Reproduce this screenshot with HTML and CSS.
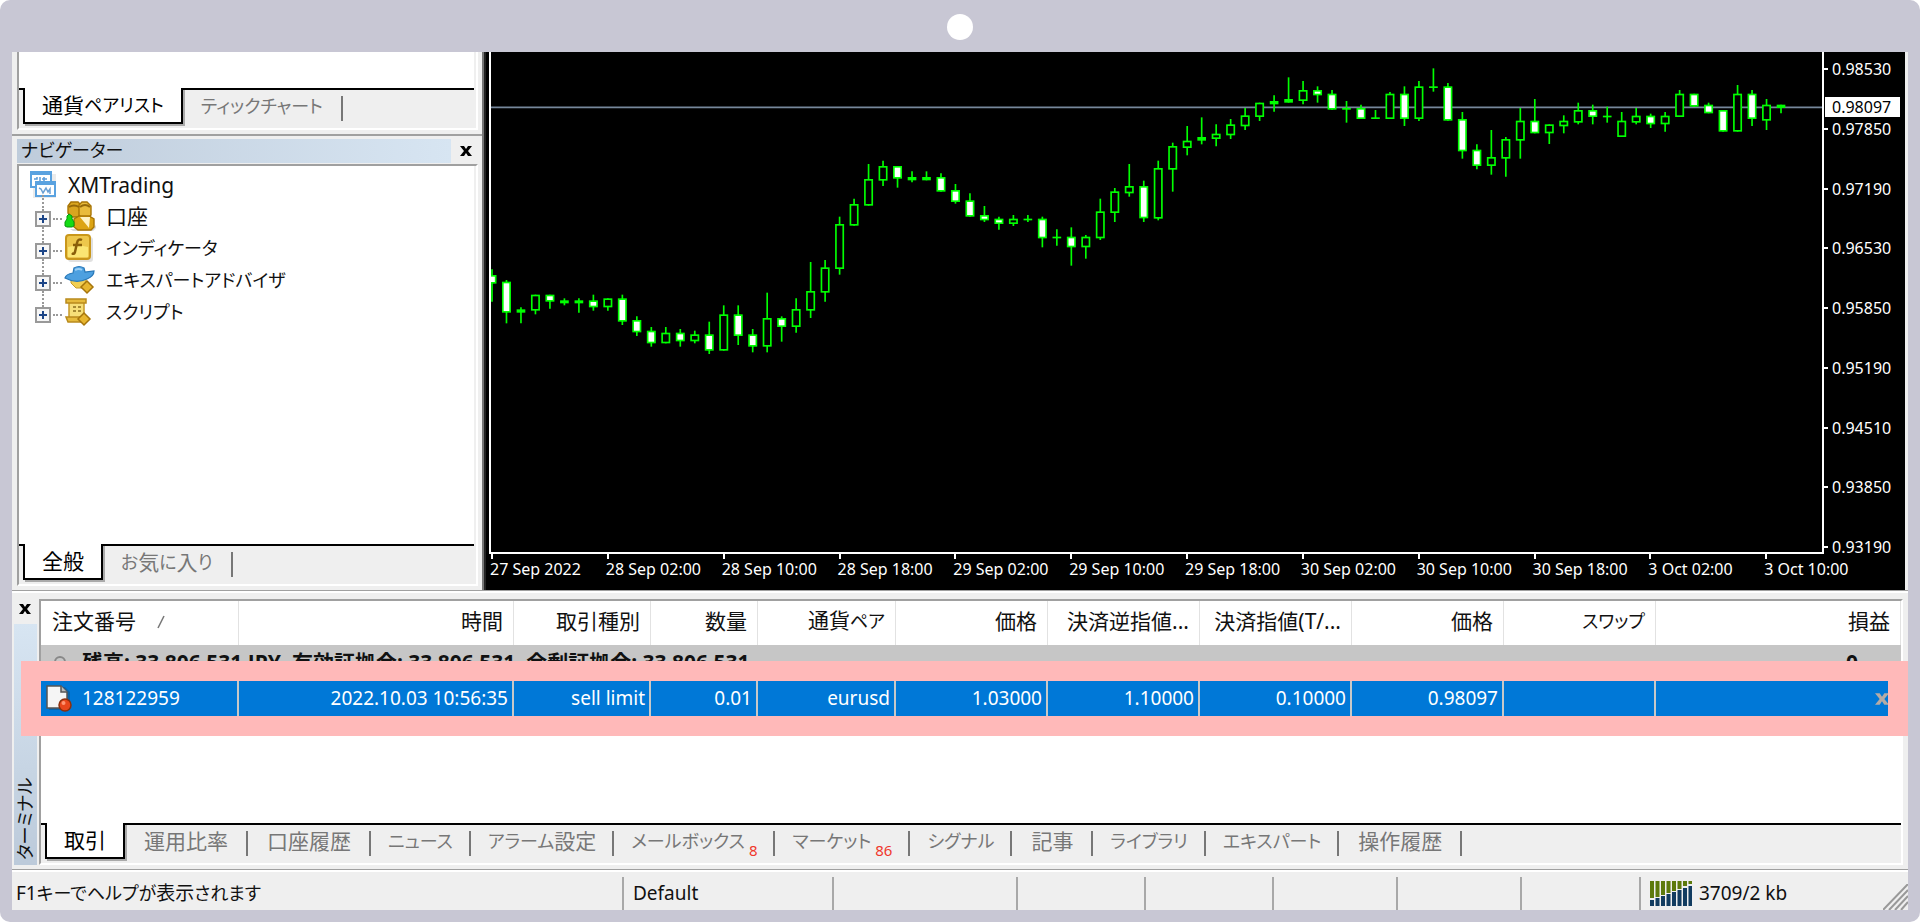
FILE: index.html
```html
<!DOCTYPE html>
<html lang="ja">
<head>
<meta charset="utf-8">
<title>XMTrading</title>
<link rel="stylesheet" href="styles.css">
</head>
<body>
<div class="device">
  <header class="device-top"><span class="camera"></span></header>
  <main class="screen">
    <div class="workspace">
      <aside class="sidebar">
        <section class="panel">
          <div class="market-list"></div>
          <nav class="tabs">
            <button class="tab active">通貨<span class="kana">ペアリスト</span></button>
            <button class="tab"><span class="kana">ティックチャート</span></button>
          </nav>
        </section>
        <section class="navigator">
          <header class="panel-title">
            <h2 class="kana">ナビゲーター</h2>
            <button class="close" aria-label="閉じる"><svg viewBox="0 0 12 10" width="12" height="10"><path d="M0 0h4l2 3 2-3h4L8 5l4 5H8L6 7l-2 3H0l4-5z"/></svg></button>
          </header>
          <div class="panel nav-panel">
            <ul class="tree">
              <li class="root">
                <svg class="ico" viewBox="0 0 28 28" width="28" height="28"><rect x="3" y="3" width="23" height="24" fill="#000" opacity=".08"/><rect x="1" y="1" width="20" height="15" fill="#fff" stroke="#5aa2e0" stroke-width="2"/><path d="M0 0h22v4H0z" fill="#5aa2e0"/><path d="M4 8h3v-2M10 6v5M14 6v5M12 8h5" stroke="#5a9bd8" stroke-width="1.5" fill="none"/><rect x="6" y="11" width="19" height="14" fill="#fff" stroke="#5aa2e0" stroke-width="2"/><path d="M5 10h21v4H5z" fill="#5aa2e0"/><path d="M9 17l2 1 2 4 3-5 2 4 2-3v5" stroke="#6ba0d4" stroke-width="1.5" fill="none"/></svg>
                <span>XMTrading</span>
              </li>
              <li>
                <button class="expand" aria-label="展開"></button>
                <svg class="ico" viewBox="0 0 32 30" width="32" height="30"><path d="M6 28h22l4-4v3l-3 3H9z" fill="#000" opacity=".15"/><g stroke="#a87404" stroke-width="1.4"><path d="M4 5l3-4h7l3 3v9l-3 3H7l-3-4z" fill="#d9a520"/><path d="M15 4l3-3h5l4 4v9l-4 4h-5l-3-4z" fill="#e9bb3c"/><path d="M10 18l5-3h10l5 3v8l-3 3H14l-4-3z" fill="#dca414"/></g><path d="M5 6q5-3 10 0M16 6q5-4 10 0" stroke="#95690a" stroke-width="2" fill="none"/><path d="M16 16l9 11 1-11z" fill="#fff3c5"/><path d="M1 25v-4l2-3v-3l2-2 3 2v3l2 3v4l-2 1H3z" fill="#14dc14" stroke="#08950c"/></svg>
                <span>口座</span>
              </li>
              <li>
                <button class="expand" aria-label="展開"></button>
                <svg class="ico" viewBox="0 0 32 30" width="32" height="30"><rect x="4" y="4" width="25" height="25" rx="3" fill="#000" opacity=".12"/><rect x="2" y="2" width="24" height="24" rx="3" fill="#edc74c" stroke="#c9971b" stroke-width="2"/><path d="M4 14q10-3 20 0v10H4z" fill="#fbe673"/><path d="M18 7q-4-2-5 3l-2 9q-1 3-3 1M9 12h9" stroke="#8a5f0a" stroke-width="2.500" fill="none"/></svg>
                <span class="kana">インディケータ</span>
              </li>
              <li>
                <button class="expand" aria-label="展開"></button>
                <svg class="ico" viewBox="0 0 32 30" width="32" height="30"><path d="M7 11h15v7l-4 5h-6l-5-5z" fill="#f1ce52" stroke="#c79a28"/><path d="M1 13q1-4 8-5l1-5q5-3 10 0l1 4 9-1q0 5-7 8-11 5-22-1z" fill="#4da0e0" stroke="#2878b8" stroke-width="1.200"/><path d="M11 5q4-2 7 0" stroke="#9bd0f5" stroke-width="2" fill="none"/><path d="M23 16l6 6-6 6-6-6z" fill="#e7b62f" stroke="#a6750c" stroke-width="1.500"/></svg>
                <span class="kana">エキスパートアドバイザ</span>
              </li>
              <li>
                <button class="expand" aria-label="展開"></button>
                <svg class="ico" viewBox="0 0 32 30" width="32" height="30"><path d="M5 5h15v17H5z" fill="#f6df78" stroke="#c79a28" stroke-width="1.500"/><path d="M2 2h20v4H2zM2 20h17v5H4z" fill="#e6bb3c" stroke="#b98b1c" stroke-width="1.500"/><path d="M9 10h3M14 10h3M9 14h3M14 14h3" stroke="#8a6d1c" stroke-width="1.500"/><path d="M20 16l6 6-6 6-6-6z" fill="#e7b62f" stroke="#a6750c" stroke-width="1.500"/></svg>
                <span class="kana">スクリプト</span>
              </li>
            </ul>
            <nav class="tabs">
              <button class="tab active">全般</button>
              <button class="tab"><span class="kana">お</span>気<span class="kana">に</span>入<span class="kana">り</span></button>
            </nav>
          </div>
        </section>
      </aside>

      <section class="chart">
        <div class="plot"><svg id="candles" viewBox="33 36 3993 1497" preserveAspectRatio="none"></svg></div>
        <ul class="price-axis">
          <li>0.98530</li><li>0.97850</li><li>0.97190</li><li>0.96530</li><li>0.95850</li><li>0.95190</li><li>0.94510</li><li>0.93850</li><li>0.93190</li>
        </ul>
        <output class="price-now">0.98097</output>
        <ul class="time-axis">
          <li>27 Sep 2022</li><li>28 Sep 02:00</li><li>28 Sep 10:00</li><li>28 Sep 18:00</li><li>29 Sep 02:00</li><li>29 Sep 10:00</li><li>29 Sep 18:00</li><li>30 Sep 02:00</li><li>30 Sep 10:00</li><li>30 Sep 18:00</li><li>3 Oct 02:00</li><li>3 Oct 10:00</li>
        </ul>
      </section>
    </div>

    <section class="terminal">
      <header class="terminal-side">
        <button class="close" aria-label="閉じる"><svg viewBox="0 0 12 10" width="12" height="10"><path d="M0 0h4l2 3 2-3h4L8 5l4 5H8L6 7l-2 3H0l4-5z"/></svg></button>
        <h2 class="terminal-title"><span class="kana">ターミナル</span></h2>
      </header>
      <div class="terminal-box">
        <div class="orders">
          <table class="order-table">
            <colgroup><col class="c-id"><col class="c-time"><col class="c-type"><col class="c-vol"><col class="c-sym"><col class="c-num"><col class="c-num"><col class="c-num"><col class="c-num"><col class="c-num"><col></colgroup>
            <thead><tr>
              <th>注文番号 <svg class="sort" viewBox="0 0 8 14" width="8" height="14"><path d="M7 1L1 13" stroke="#777" stroke-width="1.500"/></svg></th><th>時間</th><th>取引種別</th><th>数量</th><th>通貨<span class="kana">ペア</span></th><th>価格</th><th>決済逆指値...</th><th>決済指値(T/...</th><th>価格</th><th><span class="kana">スワップ</span></th><th>損益</th>
            </tr></thead>
            <tbody>
              <tr class="summary"><td colspan="10"><div class="balance"><span class="dot"></span><span>残高: 33 806 531 JPY&nbsp; 有効証拠金: 33 806 531&nbsp; 余剰証拠金: 33 806 531</span></div></td><td>0</td></tr>
              <tr class="order">
                <td><div class="order-id"><svg viewBox="0 0 28 28" width="28" height="28"><path d="M4 3h16l5 5v18H4z" fill="#222" opacity=".25"/><path d="M2 2h14l6 6v16H2z" fill="#f5f5f5" stroke="#555" stroke-width="1.500"/><path d="M16 2v6h6" fill="#bbb" stroke="#555" stroke-width="1.500"/><circle cx="20" cy="21" r="6" fill="#e8471c" stroke="#8c2f0c" stroke-width="1.500"/><circle cx="18.500" cy="19" r="2" fill="#ff9470"/></svg><span>128122959</span></div></td>
                <td>2022.10.03 10:56:35</td><td>sell limit</td><td>0.01</td><td>eurusd</td><td>1.03000</td><td>1.10000</td><td>0.10000</td><td>0.98097</td><td></td>
                <td class="remove"><button class="close pale" aria-label="注文を取消"><svg viewBox="0 0 12 10" width="14" height="12"><path d="M0 0h4l2 3 2-3h4L8 5l4 5H8L6 7l-2 3H0l4-5z"/></svg></button></td>
              </tr>
            </tbody>
          </table>
          <div class="highlight"></div>
        </div>
        <nav class="tabs terminal-tabs">
          <button class="tab active">取引</button>
          <button class="tab">運用比率</button>
          <button class="tab">口座履歴</button>
          <button class="tab"><span class="kana">ニュース</span></button>
          <button class="tab"><span class="kana">アラーム</span>設定</button>
          <button class="tab"><span class="kana">メールボックス</span><sub>8</sub></button>
          <button class="tab"><span class="kana">マーケット</span><sub>86</sub></button>
          <button class="tab"><span class="kana">シグナル</span></button>
          <button class="tab">記事</button>
          <button class="tab"><span class="kana">ライブラリ</span></button>
          <button class="tab"><span class="kana">エキスパート</span></button>
          <button class="tab">操作履歴</button>
        </nav>
      </div>
    </section>

    <footer class="status">
      <span class="cell help">F1<span class="kana">キーでヘルプが</span>表示<span class="kana">されます</span></span>
      <span class="cell s-profile">Default</span>
      <span class="cell s-a"></span><span class="cell s-b"></span><span class="cell s-b"></span><span class="cell s-c"></span><span class="cell s-c"></span><span class="cell s-d"></span>
      <span class="cell s-net">
        <svg viewBox="0 0 42 25" width="42" height="25"><path d="M0 0h4v17H0zM5.500 0h4v16h-4zM11 0h4v14h-4zM16.500 0h4v12h-4zM22 0h4v10h-4zM27.500 0h4v8h-4zM33 0h4v5h-4zM38.500 0h3.500v3h-3.500z" fill="#5d7a0c"/><path d="M0 19h4v6H0zM5.500 17h4v8h-4zM11 15h4v10h-4zM16.500 13h4v12h-4zM22 11h4v14h-4zM27.500 9h4v16h-4zM33 7h4v18h-4zM38.500 5h3.500v20h-3.500z" fill="#123c60"/></svg>
        3709/2 kb
      </span>
      <svg class="grip" viewBox="0 0 25 26" width="25" height="26"><path d="M0 26L25 0M6 26L25 6M12 26L25 12M18 26L25 18" stroke="#999" stroke-width="2"/></svg>
    </footer>
  </main>
</div>
<script src="chart.js"></script>
</body>
</html>
```
FILE: styles.css
```css
* { box-sizing: border-box; }
body { margin: 0; background: #fff; color: #111; font: 19px/26px "Noto Sans", "Noto Sans CJK JP", sans-serif; }
ul { list-style: none; margin: 0; padding: 0; }
h2 { margin: 0; font: inherit; }
svg { display: block; }
button { font: inherit; color: inherit; background: none; border: 0; padding: 0; }
.kana { font-size: 18px; font-feature-settings: "palt"; }

.device { min-height: 100vh; display: flex; flex-direction: column; padding: 0 12px 12px; background: #c8c7d4; border-radius: 10px; }
.device-top { height: 52px; padding-top: 2px; display: flex; justify-content: center; align-items: center; }
.camera { width: 26px; height: 26px; border-radius: 50%; background: #fff; }
.screen { flex: 1; display: flex; flex-direction: column; background: #efefef; }

.workspace { flex: 1; display: flex; border-bottom: 1px solid #a0a0a0; }
.sidebar { flex: 0 0 474px; display: flex; flex-direction: column; border-right: 4px solid #777; border-right-style: ridge; }
.panel { margin: 0 4px 4px 5px; border: 2px solid #fff; border-width: 0 2px 2px 2px; border-left-color: #a0a0a0; }
.market-list { height: 36px; margin-right: 2px; background: #fff; }
.navigator { flex: 1; display: flex; flex-direction: column; border-top: 2px solid #a0a0a0; padding-top: 3px; }
.panel-title { display: flex; align-items: center; height: 24px; margin: 0 6px 1px 5px; }
.panel-title h2 { flex: 1; padding-left: 4px; margin-right: 8px; padding-bottom: 2px; line-height: 22px; background: linear-gradient(90deg, #bfccdb, #d7e5f2); }
.close { width: 14px; height: 14px; display: grid; place-items: center; fill: #000; }
.panel-title .close { margin-right: 3px; }
.nav-panel { flex: 1; display: flex; flex-direction: column; border-top: 2px solid #a0a0a0; }

.tree { flex: 1; margin-right: 2px; padding-top: 2px; background: #fff; }
.tree li { position: relative; display: flex; align-items: center; height: 32px; padding: 0 0 2px 16px; font-size: 21px; }
.tree li > span { margin-left: 10px; }
.tree .root { padding: 0 0 0 11px; height: 33px; }
.tree .ico { flex: none; }
.expand { position: relative; width: 16px; height: 16px; margin: 6px 13px 0 0; border: 2px solid #999; background: linear-gradient(#1c4587, #1c4587) center / 8px 2px no-repeat, linear-gradient(#1c4587, #1c4587) center / 2px 8px no-repeat, #f6f6f6; }
.expand::before { content: ""; position: absolute; left: 5px; bottom: 14px; height: 16px; border-left: 2px dotted #999; }
.expand::after { content: ""; position: absolute; left: 16px; top: 5px; width: 9px; border-top: 2px dotted #999; }

.tabs { display: flex; height: 40px; margin-right: 2px; padding-left: 4px; border-top: 2px solid #000; }
.tab { height: 25px; margin-top: 6px; padding: 0 18px; line-height: 20px; display: flex; align-items: flex-start; border-right: 2px solid #777; color: #777; font-size: 21px; white-space: nowrap; }
.tab.active { height: 36px; margin-top: -2px; padding: 7px 17px 0; border: 2px solid #000; border-top: 0; background: #fff; color: #000; box-shadow: 2px 2px 0 #aaa; }
.tab sub { align-self: flex-end; margin-left: 4px; color: #f0372c; font-size: 15px; line-height: 12px; }
.terminal-tabs { margin-right: 0; }
.terminal-tabs .tab { padding: 0 18px 0 19px; }
.terminal-tabs .tab:has(> .kana:first-child) { padding: 0 16px 0 17px; }
.terminal-tabs .tab.active { padding: 7px 17px 0; }

.chart { position: relative; flex: 1; display: grid; grid-template: 1fr 36px / 1fr 81px; padding-left: 3px; margin-right: 3px; background: #000; color: #fff; font-size: 16px; line-height: 24px; }
.plot { border: 2px solid #fff; border-top: 0; min-height: 0; }
.plot svg { width: 100%; height: 499px; }
.price-axis { display: flex; flex-direction: column; justify-content: space-between; height: 502px; margin: 5px 0 -7px; }
.price-axis li { display: flex; align-items: center; gap: 4px; }
.price-axis li::before { content: ""; width: 4px; height: 2px; background: #fff; }
.price-now { position: absolute; right: 5px; top: 45px; width: 75px; padding-left: 7px; background: #fff; color: #000; line-height: 20px; }
.time-axis { grid-column: 1 / -1; display: grid; grid-template-columns: repeat(12, 1fr); padding-right: 26px; }
.time-axis li { padding-left: 1px; white-space: nowrap; line-height: 22px; }
.time-axis li::before { content: ""; display: block; width: 2px; height: 5px; margin: 0 0 -1px 1px; background: #fff; }

.terminal { display: flex; gap: 2px; padding: 6px 5px 4px 2px; border-top: 2px solid #fff; }
.terminal-side { flex: 0 0 23px; display: flex; flex-direction: column; align-items: center; }
.terminal-side .close { margin: 3px 2px 8px 0; }
.terminal-title { flex: 1; width: 100%; padding-top: 5px; line-height: 23px; writing-mode: vertical-rl; text-orientation: sideways; transform: rotate(180deg); background: linear-gradient(#bccada, #d7e5f2); }
.terminal-box { flex: 1; min-width: 0; border: 2px solid #fff; border-color: #a0a0a0 #fff #fff #a0a0a0; }
.orders { position: relative; min-height: 222px; background: #fff; }
.order-table { width: 100%; table-layout: fixed; border-collapse: separate; border-spacing: 0; text-align: right; }
.c-id { width: 198px; } .c-time { width: 275px; } .c-type { width: 137px; } .c-vol { width: 107px; } .c-sym { width: 138px; } .c-num { width: 152px; }
.order-table th { height: 44px; padding: 0 10px 5px 0; border-right: 1px solid #e2e2e2; font-weight: 400; font-size: 21px; text-align: right; white-space: nowrap; }
.order-table th:first-child { padding-left: 11px; text-align: left; }
.sort { display: inline-block; margin-left: 16px; }
.summary td { height: 36px; padding: 0 43px 2px 0; background: #c6c6c6; font-weight: 700; font-size: 21px; }
.summary td:first-child { padding: 0 0 2px 13px; text-align: left; }
.balance { display: flex; align-items: center; gap: 16px; white-space: nowrap; }
.dot { width: 12px; height: 12px; border: 2px solid #888; border-radius: 50%; }
.order td { height: 36px; padding: 0 4px 3px 0; background: #0078d7; color: #fff; border-right: 2px solid #c8c8c8; white-space: nowrap; }
.order .remove { padding: 0 12px 0 0; border-right: 0; }
.remove .close { margin-left: auto; fill: #b5aba5; }
.order-id { display: flex; align-items: center; gap: 9px; padding-left: 4px; }
.highlight { position: absolute; left: -20px; right: -7px; top: 60px; height: 75px; border: 20px solid #ffb9b9; pointer-events: none; }

.status { display: flex; align-items: flex-end; height: 41px; border-top: 1px solid #a0a0a0; box-shadow: inset 0 2px #fff; }
.cell { display: flex; align-items: center; height: 33px; padding-bottom: 1px; border-right: 2px solid #a8a8a8; white-space: nowrap; }
.help { flex: 1; padding-left: 4px; }
.s-profile { width: 210px; padding-left: 9px; }
.s-a { width: 184px; } .s-b { width: 128px; } .s-c { width: 124px; } .s-d { width: 119px; }
.s-net { width: 242px; gap: 7px; padding-left: 9px; border: 0; }
```
FILE: chart.js
```javascript
// Each candle: high, body top, body bottom, low, kind (w: filled, h: hollow, f: doji)
const candles = `688 705 731 785 w,720 725 818 850 w,802 808 818 850 f,764 764 812 823 h,764 764 785 806 w,775 781 790 796 f,775 781 790 818 f,764 781 802 812 w,775 775 802 812 h,764 775 845 855 w,829 840 877 888 w,861 872 910 920 w,861 878 910 910 h,867 878 904 920 w,872 883 904 910 h,845 883 932 942 w,796 823 932 932 h,796 823 888 915 w,867 883 920 937 w,758 834 920 937 h,829 834 861 905 w,775 807 861 878 h,666 753 812 834 h,660 682 758 785 h,530 552 687 704 h,476 492 557 557 h,372 417 497 497 h,362 378 422 438 h,378 378 416 443 w,394 411 421 427 f,394 411 421 421 f,400 411 455 455 w,432 450 486 491 w,460 481 530 530 w,498 525 541 546 w,530 536 552 569 w,525 536 552 558 h,525 536 541 546 f,530 536 595 622 w,568 590 595 617 f,562 590 622 677 w,585 590 622 656 h,476 514 595 600 h,444 454 519 546 h,372 438 460 470 h,422 438 535 546 w,362 384 536 541 h,308 318 389 455 h,258 302 324 346 h,232 291 302 313 f,253 281 297 319 h,237 253 286 297 h,204 226 259 270 h,188 188 231 243 h,166 183 193 215 f,112 177 188 188 f,123 150 183 193 h,139 150 166 188 w,150 161 209 209 w,183 204 209 248 f,194 204 237 237 w,210 232 237 237 f,156 161 237 237 h,139 161 237 258 w,123 139 237 243 h,85 139 144 155 f,129 139 242 242 w,216 237 334 356 w,313 329 378 388 w,270 351 378 404 h,291 297 356 410 h,204 242 302 356 h,177 242 280 280 w,253 253 280 312 h,226 242 259 280 h,188 210 248 253 h,194 210 231 253 w,200 227 232 248 f,216 242 291 291 h,204 227 248 253 h,221 227 253 264 w,216 227 253 275 h,150 161 231 231 h,161 161 200 200 w,188 194 220 220 w,210 210 275 275 w,135 161 275 275 h,150 161 237 258 w,177 194 242 270 h,194 194 204 220 f`;
const fills = { w: '#fff', h: '#000', f: '#0f0' };
let out = '<path d="M33 202H4026" stroke="#76879b" stroke-width="5"/>';
candles.split(',').forEach((row, i) => {
  const [high, top, bottom, low, kind] = row.split(' ');
  const x = 36 + i * 43.45;
  out += `<path d="M${x} ${high}V${low}" stroke="#0f0" stroke-width="5"/>`;
  out += kind === 'f'
    ? `<rect x="${x - 13}" y="${top}" width="26" height="${bottom - top}" fill="#0f0"/>`
    : `<rect x="${x - 11}" y="${+top + 2.5}" width="22" height="${bottom - top - 5}" fill="${fills[kind]}" stroke="#0f0" stroke-width="5"/>`;
});
document.getElementById('candles').innerHTML = out;
```
